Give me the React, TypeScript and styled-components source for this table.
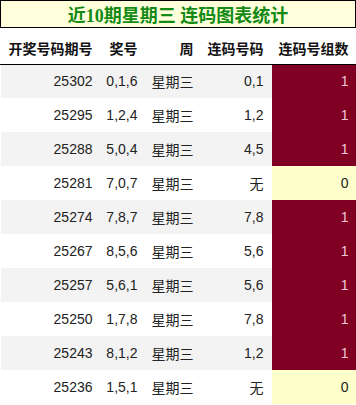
import React from 'react'
import styled, { createGlobalStyle } from 'styled-components'

const GlobalStyle = createGlobalStyle`
  html, body {
    margin: 0;
    padding: 0;
    background: #ffffff;
  }
  body {
    font-family: 'Liberation Sans', 'Noto Sans CJK SC', sans-serif;
  }
`

const Page = styled.div`
  width: 356px;
`

const TitleBox = styled.div`
  height: 26px;
  border: 1px solid #000;
  background: #ffffdc;
  display: flex;
  align-items: center;
  justify-content: center;
  font-family: 'Liberation Serif', 'Noto Sans CJK SC', serif;
  font-weight: bold;
  font-size: 18px;
  color: #138a13;
`

const Table = styled.table`
  width: 356px;
  table-layout: fixed;
  border-collapse: collapse;
  font-size: 14px;
  color: #222;
`

const HeadCell = styled.th`
  height: 36px;
  padding: 4px 8px 0 0;
  box-sizing: border-box;
  text-align: right;
  font-weight: bold;
  color: #111;
  white-space: nowrap;
  border-bottom: 1px solid #000;
`

const Row = styled.tr<{ $odd: boolean }>`
  background: ${(p) => (p.$odd ? '#f3f3f3' : '#ffffff')};
`

const Cell = styled.td`
  height: 34px;
  padding: 0 8px 0 0;
  box-sizing: border-box;
  text-align: right;
  white-space: nowrap;
  &:first-child {
    border-left: 1px solid #fff;
  }
`

const CountCell = styled(Cell)<{ $hit: boolean }>`
  background: ${(p) => (p.$hit ? '#800024' : '#ffffcc')};
  color: ${(p) => (p.$hit ? '#f4c6d6' : '#222')};
`

const widths = [100, 45, 56, 70, 85]

const rows = [
  ['25302', '0,1,6', '0,1', 1],
  ['25295', '1,2,4', '1,2', 1],
  ['25288', '5,0,4', '4,5', 1],
  ['25281', '7,0,7', '无', 0],
  ['25274', '7,8,7', '7,8', 1],
  ['25267', '8,5,6', '5,6', 1],
  ['25257', '5,6,1', '5,6', 1],
  ['25250', '1,7,8', '7,8', 1],
  ['25243', '8,1,2', '1,2', 1],
  ['25236', '1,5,1', '无', 0],
] as const

export default function App() {
  return (
    <Page>
      <GlobalStyle />
      <TitleBox>近10期星期三 连码图表统计</TitleBox>
      <Table>
        <colgroup>
          {widths.map((w, i) => (
            <col key={i} style={{ width: w }} />
          ))}
        </colgroup>
        <thead>
          <tr>
            <HeadCell>开奖号码期号</HeadCell>
            <HeadCell>奖号</HeadCell>
            <HeadCell>周</HeadCell>
            <HeadCell>连码号码</HeadCell>
            <HeadCell>连码号组数</HeadCell>
          </tr>
        </thead>
        <tbody>
          {rows.map(([issue, nums, pair, count], i) => (
            <Row key={issue} $odd={i % 2 === 0}>
              <Cell>{issue}</Cell>
              <Cell>{nums}</Cell>
              <Cell>星期三</Cell>
              <Cell>{pair}</Cell>
              <CountCell $hit={count > 0}>{count}</CountCell>
            </Row>
          ))}
        </tbody>
      </Table>
    </Page>
  )
}
